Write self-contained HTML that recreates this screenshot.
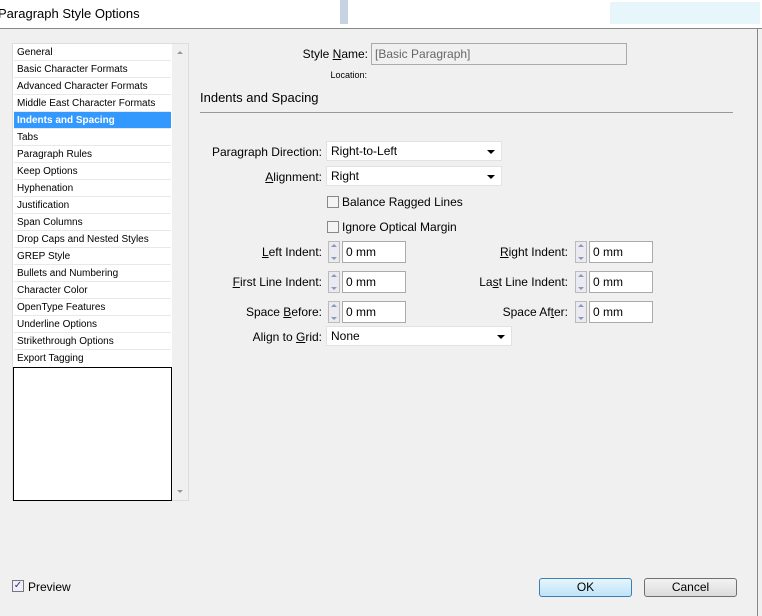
<!DOCTYPE html>
<html><head><style>
body{margin:0;width:762px;height:616px;background:#f0f0f0;font-family:"Liberation Sans",sans-serif;position:relative;overflow:hidden}
.a{position:absolute}
.t{font-size:12px;color:#000;white-space:nowrap}
.li{position:absolute;left:14px;width:157px;height:17px;font-size:10px;line-height:17px;padding-left:3px;box-sizing:border-box;border-bottom:1px solid #e8e8e8;background:#fff}
.lab{position:absolute;font-size:12px;text-align:right;white-space:nowrap}
.dd{position:absolute;height:20px;background:#fff;border:1px solid #e2e2e2;box-sizing:border-box;font-size:12px;line-height:18px;padding-left:4px}
.dd:after{content:"";position:absolute;right:6px;top:8px;border-left:4px solid transparent;border-right:4px solid transparent;border-top:4px solid #000}
.sp{position:absolute;width:12px;height:22px;border:1px solid #bbb;box-sizing:border-box;background:#eaeaf0}
.sp:before{content:"";position:absolute;left:2px;top:2px;border-left:3px solid transparent;border-right:3px solid transparent;border-bottom:3px solid #8a9ab8}
.sp:after{content:"";position:absolute;left:2px;bottom:2px;border-left:3px solid transparent;border-right:3px solid transparent;border-top:3px solid #8a9ab8}
.in{position:absolute;width:64px;height:22px;background:#fff;border:1px solid #aaa;box-sizing:border-box;font-size:12px;line-height:20px;padding-left:3px}
.cb{position:absolute;width:12px;height:12px;border:1px solid #888;background:#f4f4f4;box-sizing:border-box}
u{text-decoration:underline}
</style></head><body>
<div class="a" style="left:0;top:0;width:762px;height:28px;background:#fff;border-bottom:1px solid #888"></div>
<div class="a" style="left:340px;top:0;width:8px;height:24px;background:#c5d3e3"></div>
<div class="a" style="left:610px;top:2px;width:150px;height:22px;background:#e6f6fb"></div>
<div class="a t" style="left:-2px;top:6px;font-size:13px">Paragraph Style Options</div>
<div class="a" style="left:757px;top:28px;width:1px;height:588px;background:#888"></div>
<div class="a" style="left:12px;top:43px;width:177px;height:458px;border:1px solid #ddd;background:#fff;box-sizing:border-box"></div>
<div class="a" style="left:172px;top:44px;width:16px;height:456px;background:#f0f0f0"></div>
<div class="a" style="left:177px;top:51px;border-left:3px solid transparent;border-right:3px solid transparent;border-bottom:3px solid #999"></div>
<div class="a" style="left:177px;top:490px;border-left:3px solid transparent;border-right:3px solid transparent;border-top:3px solid #999"></div>
<div class="li" style="top:44px">General</div>
<div class="li" style="top:61px">Basic Character Formats</div>
<div class="li" style="top:78px">Advanced Character Formats</div>
<div class="li" style="top:95px">Middle East Character Formats</div>
<div class="li" style="top:112px;background:#3399ff;color:#fff;font-weight:bold">Indents and Spacing</div>
<div class="li" style="top:129px">Tabs</div>
<div class="li" style="top:146px">Paragraph Rules</div>
<div class="li" style="top:163px">Keep Options</div>
<div class="li" style="top:180px">Hyphenation</div>
<div class="li" style="top:197px">Justification</div>
<div class="li" style="top:214px">Span Columns</div>
<div class="li" style="top:231px">Drop Caps and Nested Styles</div>
<div class="li" style="top:248px">GREP Style</div>
<div class="li" style="top:265px">Bullets and Numbering</div>
<div class="li" style="top:282px">Character Color</div>
<div class="li" style="top:299px">OpenType Features</div>
<div class="li" style="top:316px">Underline Options</div>
<div class="li" style="top:333px">Strikethrough Options</div>
<div class="li" style="top:350px;border:none">Export Tagging</div>
<div class="a" style="left:13px;top:367px;width:159px;height:134px;border:1px solid #000;box-sizing:border-box;background:#fff"></div>

<div class="lab" style="right:394px;top:47px">Style <u>N</u>ame:</div>
<div class="a" style="left:371px;top:43px;width:256px;height:22px;border:1px solid #aaa;box-sizing:border-box;font-size:12px;line-height:20px;padding-left:3px;color:#666">[Basic Paragraph]</div>
<div class="lab" style="right:395px;top:70px;font-size:9px">Location:</div>
<div class="a t" style="left:200px;top:90px;font-size:13px">Indents and Spacing</div>
<div class="a" style="left:200px;top:112px;width:533px;height:1px;background:#999"></div>

<div class="lab" style="right:440px;top:145px">Paragraph Direction:</div>
<div class="dd" style="left:326px;top:141px;width:176px">Right-to-Left</div>
<div class="lab" style="right:440px;top:170px"><u>A</u>lignment:</div>
<div class="dd" style="left:326px;top:166px;width:176px">Right</div>
<div class="cb" style="left:327px;top:196px"></div>
<div class="a t" style="left:342px;top:195px">Balance Ragged Lines</div>
<div class="cb" style="left:327px;top:221px"></div>
<div class="a t" style="left:342px;top:220px">Ignore Optical Margin</div>

<div class="lab" style="right:440px;top:245px"><u>L</u>eft Indent:</div>
<div class="sp" style="left:328px;top:241px"></div><div class="in" style="left:342px;top:241px">0 mm</div>
<div class="lab" style="right:440px;top:275px"><u>F</u>irst Line Indent:</div>
<div class="sp" style="left:328px;top:271px"></div><div class="in" style="left:342px;top:271px">0 mm</div>
<div class="lab" style="right:440px;top:305px">Space <u>B</u>efore:</div>
<div class="sp" style="left:328px;top:301px"></div><div class="in" style="left:342px;top:301px">0 mm</div>

<div class="lab" style="right:194px;top:245px"><u>R</u>ight Indent:</div>
<div class="sp" style="left:575px;top:241px"></div><div class="in" style="left:589px;top:241px">0 mm</div>
<div class="lab" style="right:194px;top:275px">La<u>s</u>t Line Indent:</div>
<div class="sp" style="left:575px;top:271px"></div><div class="in" style="left:589px;top:271px">0 mm</div>
<div class="lab" style="right:194px;top:305px">Space Af<u>t</u>er:</div>
<div class="sp" style="left:575px;top:301px"></div><div class="in" style="left:589px;top:301px">0 mm</div>

<div class="lab" style="right:440px;top:330px">Align to <u>G</u>rid:</div>
<div class="dd" style="left:326px;top:326px;width:186px">None</div>

<div class="a" style="left:12px;top:580px;width:12px;height:12px;border:1px solid #777;box-sizing:border-box;background:#eef;font-size:10px;line-height:10px;text-align:center;color:#336">✓</div>
<div class="a t" style="left:28px;top:580px">Preview</div>
<div class="a" style="left:539px;top:578px;width:93px;height:19px;border:1px solid #3c7fb1;border-radius:3px;background:linear-gradient(#e6f5fd,#bfe4f8);box-sizing:border-box;font-size:12px;text-align:center;line-height:17px">OK</div>
<div class="a" style="left:644px;top:578px;width:93px;height:19px;border:1px solid #707070;border-radius:3px;background:linear-gradient(#f2f2f2,#dcdcdc);box-sizing:border-box;font-size:12px;text-align:center;line-height:17px">Cancel</div>
</body></html>
